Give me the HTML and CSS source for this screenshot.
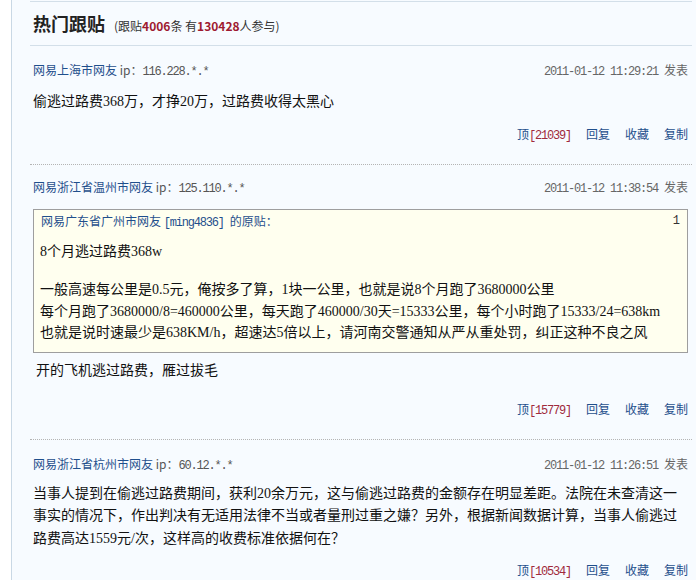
FILE: index.html
```html
<!DOCTYPE html>
<html lang="zh-CN">
<head>
<meta charset="utf-8">
<title>热门跟贴</title>
<link rel="stylesheet" href="styles.css">
</head>
<body>
<div class="wrap">
  <div class="title-bar">
    <h2 class="title">热门跟贴</h2>
    <span class="sub">(跟贴<b class="num">4006</b>条 有<b class="num">130428</b>人参与)</span>
  </div>

  <div class="post p1">
    <div class="head">
      <div class="who"><a class="user">网易上海市网友</a> <span class="ip">ip：<span class="mono">116.228.*.*</span></span></div>
      <div class="time"><span class="mono">2011-01-12 11:29:21 </span>发表</div>
    </div>
    <div class="body one">偷逃过路费368万，才挣20万，过路费收得太黑心</div>
    <div class="acts"><a class="act">顶<span class="cnt mono">[21039]</span></a><a class="act">回复</a><a class="act">收藏</a><a class="act">复制</a></div>
  </div>

  <div class="post p2">
    <div class="head">
      <div class="who"><a class="user">网易浙江省温州市网友</a> <span class="ip">ip：<span class="mono">125.110.*.*</span></span></div>
      <div class="time"><span class="mono">2011-01-12 11:38:54 </span>发表</div>
    </div>
    <div class="quote">
      <div class="qhead"><span class="quser">网易广东省广州市网友 <span class="mono">[ming4836] </span>的原贴：</span><span class="floor mono">1</span></div>
      <div class="qfirst">8个月逃过路费368w</div>
      <div class="qlines">
        <div>一般高速每公里是0.5元，俺按多了算，1块一公里，也就是说8个月跑了3680000公里</div>
        <div>每个月跑了3680000/8=460000公里，每天跑了460000/30天=15333公里，每个小时跑了15333/24=638km</div>
        <div>也就是说时速最少是638KM/h，超速达5倍以上，请河南交警通知从严从重处罚，纠正这种不良之风</div>
      </div>
    </div>
    <div class="body reply">开的飞机逃过路费，雁过拔毛</div>
    <div class="acts a2"><a class="act">顶<span class="cnt mono">[15779]</span></a><a class="act">回复</a><a class="act">收藏</a><a class="act">复制</a></div>
  </div>

  <div class="post p3">
    <div class="head">
      <div class="who"><a class="user">网易浙江省杭州市网友</a> <span class="ip">ip：<span class="mono">60.12.*.*</span></span></div>
      <div class="time"><span class="mono">2011-01-12 11:26:51 </span>发表</div>
    </div>
    <div class="body multi">当事人提到在偷逃过路费期间，获利20余万元，这与偷逃过路费的金额存在明显差距。法院在未查清这一事实的情况下，作出判决有无适用法律不当或者量刑过重之嫌？另外，根据新闻数据计算，当事人偷逃过路费高达1559元/次，这样高的收费标准依据何在？</div>
    <div class="acts"><a class="act">顶<span class="cnt mono">[10534]</span></a><a class="act">回复</a><a class="act">收藏</a><a class="act">复制</a></div>
  </div>
</div>
</body>
</html>
```

FILE: styles.css
```css
html, body {
  margin: 0;
  padding: 0;
  background: #ffffff;
}
body {
  font-family: "Noto Sans CJK SC", "Liberation Sans", sans-serif;
  color: #111;
  font-size: 12px;
}
.wrap {
  margin-left: 11px;
  border-left: 1px solid #c9d8e5;
  background: #f7fbff;
  padding: 1px 4px 0 18px;
  box-sizing: border-box;
  overflow: hidden;
  height: 580px;
}
.title-bar {
  display: flex;
  align-items: baseline;
  height: 43px;
  line-height: 43px;
  border-top: 1px solid #d3dfe9;
  border-bottom: 1px solid #d3dfe9;
  padding-left: 3px;
}
.title {
  margin: 0;
  font-size: 18px;
  font-weight: bold;
  color: #222;
}
.sub {
  margin-left: 9px;
  font-size: 12px;
  color: #333;
}
.num {
  color: #9e1a30;
  font-weight: bold;
}
.post {
  padding: 0 4px 0 3px;
  border-bottom: 1px dotted #b4b4b4;
}
.p1 { padding-top: 12px; padding-bottom: 18px; }
.p2 { padding-top: 10px; padding-bottom: 18px; }
.p3 { padding-top: 12px; border-bottom: none; }
.head {
  display: flex;
  justify-content: space-between;
  align-items: baseline;
  height: 24px;
  line-height: 24px;
}
.user {
  color: #1f4f8c;
  font-size: 12px;
}
.ip {
  color: #555;
  font-size: 12px;
}
.mono {
  font-family: "Liberation Mono", "DejaVu Sans Mono", monospace;
  letter-spacing: -1.2px;
}
.time {
  color: #666;
  font-size: 12px;
}
.body,
.qfirst,
.qlines {
  font-family: "Liberation Serif", "Noto Sans CJK SC", serif;
  font-size: 14px;
  color: #111;
}
.one {
  margin-top: 8px;
  line-height: 24px;
}
.acts {
  display: flex;
  justify-content: flex-end;
  margin-top: 10px;
  line-height: 20px;
  gap: 15px;
}
.act {
  color: #1f4f8c;
  font-size: 12px;
}
.cnt {
  color: #a02a3c;
}
.quote {
  margin-top: 10px;
  border: 1px solid #9e9e9e;
  background: #ffffef;
  padding: 0 7px 8px 6px;
}
.qhead {
  display: flex;
  justify-content: space-between;
  line-height: 22px;
  color: #1f4f8c;
  font-size: 12px;
  padding-left: 1px;
}
.floor {
  color: #333;
  letter-spacing: 0;
}
.qfirst {
  margin-top: 7px;
  line-height: 22px;
}
.qlines {
  margin-top: 16px;
  line-height: 21.5px;
  white-space: nowrap;
}
.reply {
  margin-top: 6px;
  line-height: 24px;
  padding-left: 3px;
}
.a2 {
  margin-top: 16px;
}
.multi {
  margin-top: 7px;
  line-height: 22.5px;
}
```
